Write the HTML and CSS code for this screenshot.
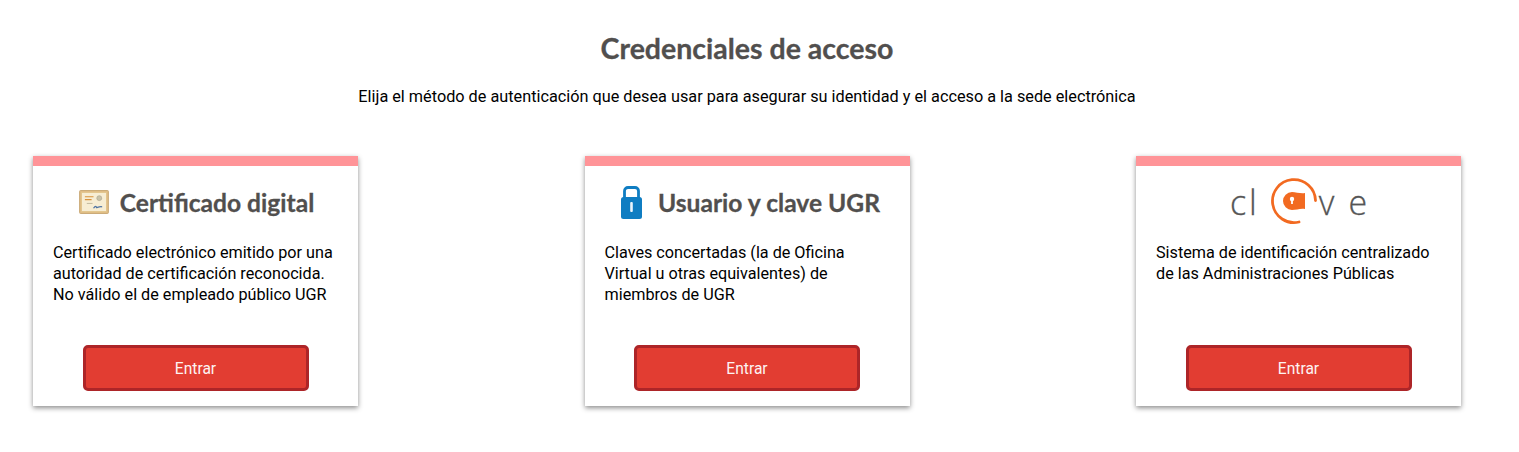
FILE: index.html
```html
<!DOCTYPE html>
<html lang="es">
<head>
<meta charset="utf-8">
<title>Credenciales de acceso</title>
<link rel="stylesheet" href="styles.css">
</head>
<body>
<main class="page">
  <h1 class="title">Credenciales de acceso</h1>
  <p class="lead">Elija el método de autenticación que desea usar para asegurar su identidad y el acceso a la sede electrónica</p>
  <section class="cards">
    <article class="card">
      <h2 class="card-head card-head-cert">
        <svg class="icon-cert" viewBox="0 0 31 25" aria-hidden="true">
          <rect x="0.5" y="0.5" width="30" height="24" rx="1" fill="#e0bd85" stroke="#c9a874"/>
          <rect x="2.5" y="2.5" width="26" height="20" fill="#f7edd3" stroke="#e2c48c"/>
          <path d="M6 7h9M6 10h7" stroke="#d8923e" stroke-width="1.2"/>
          <circle cx="21" cy="8.5" r="2.6" fill="#c9c2a8" stroke="#a8a38e" stroke-width=".6"/>
          <path d="M8 14h6" stroke="#bfb89c"/>
          <path d="M15 19c2-3 3-2 3-1s2-1 6-.5" stroke="#4f74a3" stroke-width="1.3" fill="none"/>
        </svg>
        <span>Certificado digital</span>
      </h2>
      <p class="card-text">Certificado electrónico emitido por una autoridad de certificación reconocida. No válido el de empleado público UGR</p>
      <a class="btn" href="#">Entrar</a>
    </article>
    <article class="card">
      <h2 class="card-head card-head-lock">
        <svg class="icon-lock" viewBox="0 0 21 33" aria-hidden="true">
          <path d="M3.5 14V5a3.5 3.5 0 0 1 3.5-3.5h7a3.5 3.5 0 0 1 3.5 3.5V14" fill="none" stroke="#0f7dc2" stroke-width="2.8"/>
          <rect x="0" y="11" width="21" height="22" rx="2.5" fill="#0f7dc2"/>
          <rect x="9.2" y="16" width="2.6" height="10" rx="1" fill="#eaf4fb"/>
        </svg>
        <span>Usuario y clave UGR</span>
      </h2>
      <p class="card-text">Claves concertadas (la de Oficina Virtual u otras equivalentes) de miembros de UGR</p>
      <a class="btn" href="#">Entrar</a>
    </article>
    <article class="card">
      <h2 class="card-head">
        <span class="clave">
          <span class="clave-letter">c</span>
          <span class="clave-letter clave-l">l</span>
          <svg class="icon-clave" viewBox="0 0 48 48" aria-hidden="true">
            <path d="M45.5 23.5A21.5 21.5 0 1 0 29 45" fill="none" stroke="#f26a21" stroke-width="2.8" stroke-linecap="round"/>
            <path d="M22 15a9 9 0 1 0 0 18c4 0 9-2 13-1V16c-4 1-9-1-13-1z" fill="#f26a21"/>
            <circle cx="22" cy="22" r="2.2" fill="#fff"/>
            <rect x="21.1" y="22" width="1.8" height="5" fill="#fff"/>
          </svg>
          <span class="clave-letter clave-v">v</span>
          <span class="clave-letter clave-e">e</span>
        </span>
      </h2>
      <p class="card-text">Sistema de identificación centralizado de las Administraciones Públicas</p>
      <a class="btn" href="#">Entrar</a>
    </article>
  </section>
</main>
</body>
</html>
```

FILE: styles.css
```css
* { box-sizing: border-box; }
html, body { margin: 0; padding: 0; background: #fff; }
body { font-family: Roboto, "Noto Sans", sans-serif; color: #000; height: 452px; overflow: hidden; }
.page { padding: 32px 58px 0 33px; }
.title {
  margin: 0;
  font-family: Lato, "Open Sans", sans-serif;
  font-weight: 700;
  font-size: 28.5px;
  line-height: 33px;
  color: #514f4e;
  text-align: center;
  -webkit-text-stroke: .3px #514f4e;
}
.lead {
  margin: 22px 0 0;
  font-size: 16.25px;
  line-height: 20px;
  text-align: center;
}
.cards { display: flex; justify-content: space-between; margin-top: 49px; }
.card {
  width: 325px;
  height: 250px;
  background: #fff;
  border-top: 10px solid #ff9498;
  box-shadow: 0 2px 5px rgba(0,0,0,.45);
  padding: 0 20px;
  display: flex;
  flex-direction: column;
}
.card-head {
  margin: 0;
  height: 76px;
  padding-bottom: 4px;
  display: flex;
  align-items: center;
  justify-content: center;
  gap: 11px;
  font-family: Lato, "Open Sans", sans-serif;
  font-weight: 700;
  font-size: 24.6px;
  color: #514f4e;
  -webkit-text-stroke: .3px #514f4e;
}
.card-head-cert { padding-left: 2px; }
.card-head-lock { padding-left: 7px; }
.icon-cert { width: 30px; height: 24px; flex: none; }
.icon-lock { width: 21px; height: 33px; flex: none; margin-right: 5px; }
.clave { display: flex; align-items: center; -webkit-text-stroke: 0; }
.clave-letter {
  font-family: "Open Sans", Lato, sans-serif;
  font-weight: 300;
  font-size: 34px;
  line-height: 40px;
  color: #555;
  -webkit-text-stroke: .3px #555;
}
.clave-l { margin-left: 3px; }
.clave-v { margin-left: 1px; }
.clave-e { margin-left: 14px; }
.icon-clave { width: 48px; height: 48px; margin: 0 0 2px 13px; flex: none; }
.card-text {
  margin: 0;
  font-size: 16.2px;
  line-height: 21px;
  height: 103px;
}
.btn {
  display: flex;
  align-items: center;
  justify-content: center;
  align-self: center;
  width: 226px;
  height: 46px;
  padding-top: 1px;
  background: #e23d32;
  border: 3px solid #ad2528;
  border-radius: 5px;
  color: #fdf3f2;
  font-size: 15.6px;
  text-decoration: none;
}
```
